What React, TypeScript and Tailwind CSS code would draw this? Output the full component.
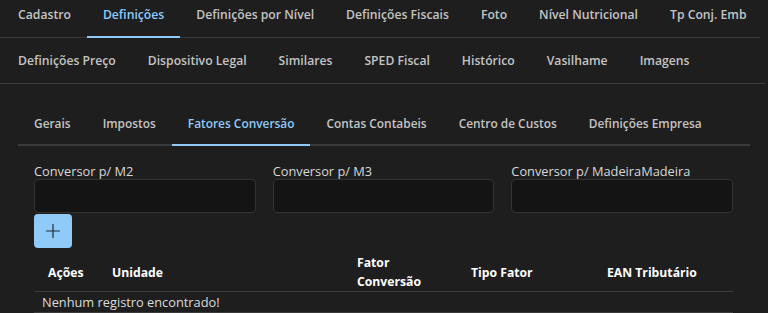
import { Plus } from "lucide-react";

const topTabs = [
  "Cadastro",
  "Definições",
  "Definições por Nível",
  "Definições Fiscais",
  "Foto",
  "Nível Nutricional",
  "Tp Conj. Emb",
];

const secondTabs = [
  "Definições Preço",
  "Dispositivo Legal",
  "Similares",
  "SPED Fiscal",
  "Histórico",
  "Vasilhame",
  "Imagens",
];

const innerTabs = [
  "Gerais",
  "Impostos",
  "Fatores Conversão",
  "Contas Contabeis",
  "Centro de Custos",
  "Definições Empresa",
];

const fields = ["Conversor p/ M2", "Conversor p/ M3", "Conversor p/ MadeiraMadeira"];

function Tab({ label, active, inner }: { label: string; active?: boolean; inner?: boolean }) {
  return (
    <div
      className={`relative flex shrink-0 items-center px-4 pt-[2px] font-semibold whitespace-nowrap ${
        inner ? "h-[43px] text-[11.9px]" : "h-[45px] text-[12.2px]"
      } ${active ? "text-[#90caf9]" : "text-[#c4c4c4]"}`}
    >
      {label}
      {active ? (
        <span
          className={`absolute right-0 left-0 h-[2px] bg-[#90caf9] ${
            inner ? "-bottom-[2px]" : "-bottom-px"
          }`}
        />
      ) : null}
    </div>
  );
}

export default function App() {
  return (
    <div
      className="h-[313px] w-[768px] overflow-hidden bg-[#1e1e1e] text-[#d6d6d6]"
      style={{ fontFamily: '"Open Sans", "Noto Sans", sans-serif' }}
    >
      <div className="-mt-[8px]">
        <div className="flex w-[760px] border-b border-[#3a3a3a] pl-[2px]">
          {topTabs.map((t) => (
            <Tab key={t} label={t} active={t === "Definições"} />
          ))}
        </div>
        <div className="flex w-[765px] border-b border-[#3a3a3a] pl-[2px]">
          {secondTabs.map((t) => (
            <Tab key={t} label={t} />
          ))}
        </div>

        <div className="px-[18px] pt-[17px]">
          <div className="flex w-[732px] border-b-2 border-[#3a3a3a]">
            {innerTabs.map((t) => (
              <Tab key={t} label={t} inner active={t === "Fatores Conversão"} />
            ))}
          </div>

          <div className="box-content w-[699px] pt-4 pl-4">
            <div className="grid grid-cols-3 gap-x-[17px]">
              {fields.map((f) => (
                <label key={f} className="flex flex-col">
                  <span className="pt-px text-[12.8px] leading-[16px] text-[#d8d8d8]">{f}</span>
                  <input
                    type="text"
                    className="h-[34px] rounded border border-[#333] bg-[#141414] px-2 text-sm text-white outline-none"
                  />
                </label>
              ))}
            </div>

            <button
              type="button"
              className="mt-px flex h-[34px] w-[38px] items-center justify-center rounded bg-[#90caf9] text-[#1e2a36]"
            >
              <Plus size={22} strokeWidth={1.3} />
            </button>

            <table className="w-full border-collapse text-left text-[12.2px]">
              <thead>
                <tr className="border-b border-[#3a3a3a] font-bold text-white">
                  <th className="w-[64px] pt-[5px] pl-[14px] leading-[19px]">Ações</th>
                  <th className="w-[245px] pt-[5px] pl-[14px] leading-[19px]">Unidade</th>
                  <th className="w-[114px] pt-[5px] pr-[14px] pl-[14px] leading-[19px]">
                    Fator Conversão
                  </th>
                  <th className="w-[136px] pt-[5px] pl-[14px] leading-[19px]">Tipo Fator</th>
                  <th className="pt-[5px] pl-[14px] leading-[19px]">EAN Tributário</th>
                </tr>
              </thead>
              <tbody>
                <tr className="border-b border-[#3a3a3a]">
                  <td
                    colSpan={5}
                    className="h-[21px] pt-px pl-2 text-[12.8px] font-normal text-[#dcdcdc]"
                  >
                    Nenhum registro encontrado!
                  </td>
                </tr>
              </tbody>
            </table>
          </div>
        </div>
      </div>
    </div>
  );
}
